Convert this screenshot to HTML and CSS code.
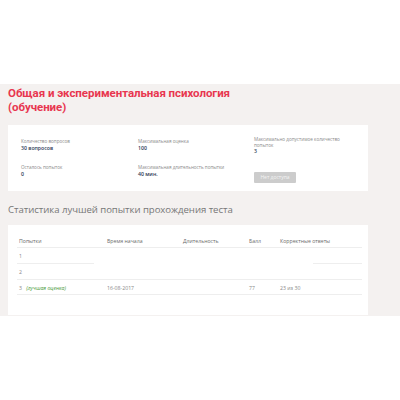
FILE: index.html
```html
<!DOCTYPE html>
<html lang="ru">
<head>
<meta charset="utf-8">
<link rel="stylesheet" href="styles.css">
</head>
<body>
<div class="top"></div>
<div class="band">
  <h1 class="title">Общая и экспериментальная психология<br>(обучение)</h1>
  <div class="card info">
    <div class="item"><div class="label">Количество вопросов</div><div class="value">30 вопросов</div></div>
    <div class="item"><div class="label">Максимальная оценка</div><div class="value">100</div></div>
    <div class="item"><div class="label">Максимально допустимое количество<br>попыток</div><div class="value">3</div></div>
    <div class="item"><div class="label">Осталось попыток</div><div class="value">0</div></div>
    <div class="item"><div class="label">Максимальная длительность попытки</div><div class="value">40 мин.</div></div>
    <div class="item"><span class="btn">Нет доступа</span></div>
  </div>
  <h2 class="subtitle">Статистика лучшей попытки прохождения теста</h2>
  <div class="card stats">
    <div class="table">
      <div class="th">Попытки</div>
      <div class="th">Время начала</div>
      <div class="th">Длительность</div>
      <div class="th">Балл</div>
      <div class="th">Корректные ответы</div>

      <div class="td r1 first">1</div>
      <div class="td r1"></div>
      <div class="td r1"></div>
      <div class="td r1"></div>
      <div class="td r1 last"></div>

      <div class="td">2</div>
      <div class="td"></div>
      <div class="td"></div>
      <div class="td"></div>
      <div class="td"></div>

      <div class="td">3 <span class="best">(лучшая оценка)</span></div>
      <div class="td">16-08-2017</div>
      <div class="td"></div>
      <div class="td">77</div>
      <div class="td">23 из 30</div>
    </div>
  </div>
</div>
</body>
</html>
```
FILE: styles.css
```css
html, body {
  margin: 0;
  padding: 0;
  background: #ffffff;
  font-family: "Open Sans", "Liberation Sans", sans-serif;
}
.top {
  height: 84px;
}
.band {
  background: #f4f1f0;
  padding: 3px 32px 0 8px;
  height: 229px;
}
.title {
  margin: 0;
  font-family: Roboto, "Open Sans", sans-serif;
  font-size: 11.5px;
  line-height: 13.6px;
  font-weight: 700;
  color: #e8364f;
  letter-spacing: -0.05px;
}
.card {
  background: #ffffff;
}
.info {
  margin-top: 11px;
  height: 66px;
  box-sizing: border-box;
  padding: 12px 0 0 13px;
  display: grid;
  grid-template-columns: 117px 116px 1fr;
  grid-template-rows: 25px 20px;
}
.label {
  font-size: 4.6px;
  line-height: 5.6px;
  color: #8a8a8a;
}
.value {
  font-size: 5.2px;
  line-height: 6.4px;
  color: #2e3a55;
  font-weight: 600;
}
.item:nth-child(1), .item:nth-child(2) { padding-top: 2px; }
.item:nth-child(4), .item:nth-child(5) { padding-top: 3px; }
.btn {
  display: inline-block;
  width: 42px;
  height: 11px;
  line-height: 11px;
  background: #cccccc;
  color: #f4f4f4;
  font-size: 5px;
  text-align: center;
  border-radius: 1px;
}
.subtitle {
  margin: 13px 0 0 0;
  font-size: 9.6px;
  line-height: 12px;
  font-weight: 400;
  color: #777777;
  letter-spacing: -0.05px;
}
.stats {
  margin-top: 9px;
  height: 90px;
  box-sizing: border-box;
  padding: 11px 6px 0 9px;
}
.table {
  display: grid;
  grid-template-columns: 88px 76px 66px 31px 84px;
  grid-template-rows: 12px 16px 16px 15px;
}
.th {
  font-size: 5.2px;
  line-height: 11px;
  color: #6a6a6a;
  padding-left: 2px;
  border-bottom: 0.6px solid #eeeeee;
}
.td {
  font-size: 5.2px;
  line-height: 16px;
  color: #888888;
  padding-left: 2px;
  border-bottom: 0.6px solid #eeeeee;
}
.td.r1 {
  border-bottom-color: transparent;
  position: relative;
}
.td.r1.first::after {
  content: "";
  position: absolute;
  left: 0;
  bottom: -0.6px;
  width: 77px;
  border-bottom: 0.6px solid #eeeeee;
}
.td.r1.last::after {
  content: "";
  position: absolute;
  right: 0;
  bottom: -0.6px;
  width: 49px;
  border-bottom: 0.6px solid #eeeeee;
}
.best {
  color: #4a9a3a;
  font-style: italic;
  margin-left: 3px;
}
```
